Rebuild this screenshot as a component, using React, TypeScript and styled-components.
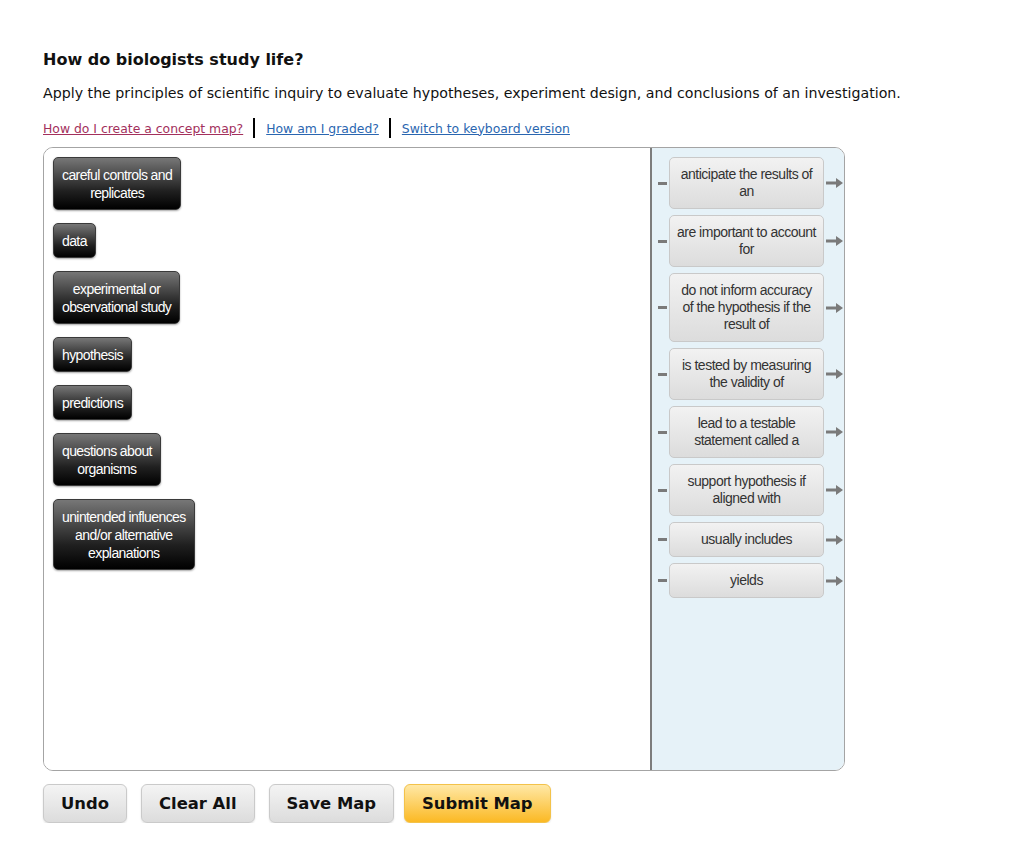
import { createGlobalStyle, styled } from "styled-components";

const Global = createGlobalStyle`
    body {
        margin: 0;
        background: #fff;
        font-family: "DejaVu Sans", Verdana, sans-serif;
        color: #111;
    }
`;

const Page = styled("div")`
    padding: 50px 0 0 43px;
    width: 802px;
`;

const Title = styled("h1")`
    font-size: 16px;
    font-weight: bold;
    margin: 0 0 13px;
    line-height: 20px;
`;

const Intro = styled("p")`
    font-size: 14.2px;
    margin: 0 0 15px;
    line-height: 20px;
    white-space: nowrap;
`;

const LinkRow = styled("div")`
    display: flex;
    align-items: center;
    font-size: 12.4px;
    margin-bottom: 9px;
    height: 20px;
`;

const HelpLink = styled("a")<{ $visited?: boolean }>`
    color: ${(p) => (p.$visited ? "#a3305c" : "#2a66b0")};
    text-decoration: underline;
    cursor: pointer;
`;

const Sep = styled("span")`
    display: inline-block;
    width: 2px;
    height: 20px;
    background: #000;
    margin: 0 11px 0 10px;
`;

const MapBox = styled("div")`
    display: grid;
    grid-template-columns: 608px 1fr;
    height: 622px;
    border: 1px solid #a4a4a4;
    border-radius: 10px;
    overflow: hidden;
`;

const Canvas = styled("div")`
    background: #fff;
    border-right: 2px solid #7d7d7d;
    padding: 9px 0 0 9px;
    display: flex;
    flex-direction: column;
    align-items: flex-start;
    gap: 13px;
`;

const Concept = styled("div")`
    background: linear-gradient(#777, #202020 65%, #000);
    color: #fff;
    font-family: "Liberation Sans", Arial, sans-serif;
    font-size: 14px;
    letter-spacing: -0.6px;
    line-height: 18px;
    text-align: center;
    padding: 8px 8px 7px;
    border-radius: 5px;
    border: 1px solid #3a3a3a;
    box-shadow: 0 1px 2px rgba(0, 0, 0, 0.35);
`;

const Panel = styled("div")`
    background: #e6f2f8;
    padding: 9px 0 0 5px;
    display: flex;
    flex-direction: column;
    gap: 6px;
`;

const LinkItem = styled("div")`
    display: flex;
    align-items: center;
`;

const Dash = styled("span")`
    width: 9px;
    height: 3px;
    background: #7a7a7a;
    margin: 0 2px 0 1px;
`;

const LinkBox = styled("div")`
    width: 155px;
    box-sizing: border-box;
    background: linear-gradient(#f2f2f2, #dcdcdc);
    border: 1px solid #c9c9c9;
    border-radius: 5px;
    color: #333;
    font-family: "Liberation Sans", Arial, sans-serif;
    font-size: 14px;
    letter-spacing: -0.5px;
    line-height: 17px;
    text-align: center;
    padding: 8px 6px 8px;
`;

const Arrow = styled("svg")`
    margin-left: 2px;
    flex-shrink: 0;
`;

const Actions = styled("div")`
    display: flex;
    gap: 14px;
    margin-top: 13px;
`;

const Btn = styled("button")<{ $primary?: boolean }>`
    height: 39px;
    padding: 0 17px;
    font-family: "DejaVu Sans", Verdana, sans-serif;
    font-weight: bold;
    font-size: 16.4px;
    color: #111;
    border-radius: 6px;
    border: 1px solid ${(p) => (p.$primary ? "#f3c24a" : "#cacaca")};
    background: ${(p) =>
        p.$primary
            ? "linear-gradient(#ffe8a6, #fbb924)"
            : "linear-gradient(#f4f4f4, #dcdcdc)"};
    box-shadow: 0 1px 2px rgba(0, 0, 0, 0.12);
    cursor: pointer;
    &:last-child {
        margin-left: -4px;
    }
`;

const concepts = [
    ["careful controls and", "replicates"],
    ["data"],
    ["experimental or", "observational study"],
    ["hypothesis"],
    ["predictions"],
    ["questions about", "organisms"],
    ["unintended influences", "and/or alternative", "explanations"],
];

const links = [
    ["anticipate the results of", "an"],
    ["are important to account", "for"],
    ["do not inform accuracy", "of the hypothesis if the", "result of"],
    ["is tested by measuring", "the validity of"],
    ["lead to a testable", "statement called a"],
    ["support hypothesis if", "aligned with"],
    ["usually includes"],
    ["yields"],
];

const Lines = ({ lines }: { lines: string[] }) => (
    <>
        {lines.map((l, i) => (
            <div key={i}>{l}</div>
        ))}
    </>
);

export default function App() {
    return (
        <>
            <Global />
            <Page>
                <Title>How do biologists study life?</Title>
                <Intro>
                    Apply the principles of scientific inquiry to evaluate hypotheses, experiment design, and conclusions of an investigation.
                </Intro>
                <LinkRow>
                    <HelpLink $visited>How do I create a concept map?</HelpLink>
                    <Sep />
                    <HelpLink>How am I graded?</HelpLink>
                    <Sep />
                    <HelpLink>Switch to keyboard version</HelpLink>
                </LinkRow>
                <MapBox>
                    <Canvas>
                        {concepts.map((c, i) => (
                            <Concept key={i}>
                                <Lines lines={c} />
                            </Concept>
                        ))}
                    </Canvas>
                    <Panel>
                        {links.map((l, i) => (
                            <LinkItem key={i}>
                                <Dash />
                                <LinkBox>
                                    <Lines lines={l} />
                                </LinkBox>
                                <Arrow width="17" height="10" viewBox="0 0 17 10">
                                    <rect x="0" y="3.5" width="11" height="3" fill="#7a7a7a" />
                                    <path d="M10 0 L17 5 L10 10 Z" fill="#7a7a7a" />
                                </Arrow>
                            </LinkItem>
                        ))}
                    </Panel>
                </MapBox>
                <Actions>
                    <Btn>Undo</Btn>
                    <Btn>Clear All</Btn>
                    <Btn>Save Map</Btn>
                    <Btn $primary>Submit Map</Btn>
                </Actions>
            </Page>
        </>
    );
}
